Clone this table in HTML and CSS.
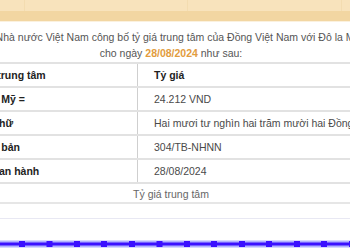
FILE: index.html
```html
<!DOCTYPE html>
<html lang="vi">
<head>
<meta charset="utf-8">
<title>Tỷ giá trung tâm</title>
<link rel="stylesheet" href="styles.css">
</head>
<body>
<div class="band">
  <div class="band-row light">
    <span class="bc c1"></span><span class="bc c2"></span><span class="bc c3"></span><span class="bc c4"></span>
  </div>
  <div class="band-row dark"></div>
</div>
<div class="page">
  <p class="intro">
    <span class="line">Ngân hàng Nhà nước Việt Nam công bố tỷ giá trung tâm của Đồng Việt Nam với Đô la Mỹ áp dụng</span>
    <span class="line">cho ngày <span class="date">28/08/2024</span> như sau:</span>
  </p>
  <div class="rates">
    <div class="row head"><div class="cell key">Tỷ giá trung tâm</div><div class="cell val">Tỷ giá</div></div>
    <div class="row"><div class="cell key">1 Đô la Mỹ =</div><div class="cell val">24.212 VND</div></div>
    <div class="row"><div class="cell key">Bằng chữ</div><div class="cell val">Hai mươi tư nghìn hai trăm mười hai Đồng</div></div>
    <div class="row"><div class="cell key">Số văn bản</div><div class="cell val">304/TB-NHNN</div></div>
    <div class="row last"><div class="cell key">Ngày ban hành</div><div class="cell val">28/08/2024</div></div>
  </div>
  <div class="caption">Tỷ giá trung tâm</div>
</div>
<div class="chart">
  <svg class="chart-svg" width="350" height="32" viewBox="0 0 350 32">
    <line x1="0" y1="25" x2="350" y2="25" stroke="#b0b0ff" stroke-width="7"/>
    <line x1="0" y1="25" x2="350" y2="25" stroke="#3a10ff" stroke-width="3"/>
    <g fill="#3a10ff">
      <rect x="19" y="22" width="6" height="6"/>
      <rect x="46.5" y="22" width="6" height="6"/>
      <rect x="74" y="22" width="6" height="6"/>
      <rect x="101" y="22" width="6" height="6"/>
      <rect x="129" y="22" width="6" height="6"/>
      <rect x="156.5" y="22" width="6" height="6"/>
      <rect x="184" y="22" width="6" height="6"/>
      <rect x="211" y="22" width="6" height="6"/>
      <rect x="239" y="22" width="6" height="6"/>
      <rect x="266" y="22" width="6" height="6"/>
      <rect x="294" y="22" width="6" height="6"/>
      <rect x="321" y="22" width="6" height="6"/>
      <rect x="349" y="22" width="6" height="6"/>
    </g>
  </svg>
</div>
</body>
</html>
```
FILE: styles.css
```css
html, body {
  margin: 0;
  padding: 0;
}
body {
  width: 350px;
  height: 250px;
  overflow: hidden;
  background: #fff;
  font-family: "Liberation Sans", Arial, sans-serif;
  font-size: 10.5px;
  color: #555;
}
.band {
  width: 350px;
}
.band-row {
  display: flex;
}
.band-row.light {
  height: 11px;
  background: #f8e3bc;
}
.band-row.dark {
  height: 10px;
  background: #f2d6a2;
  border-bottom: 1px solid #fbf1de;
}
.bc {
  display: block;
  height: 100%;
  border-right: 1px solid #f3dcb0;
}
.c1 { width: 24px; }
.c2 { width: 162px; }
.c3 { width: 153px; }
.c4 { flex: 1; border-right: none; }

.page {
  width: 460px;
  margin-left: -59px;
}
.intro {
  margin: 7px 0 0;
  text-align: center;
  line-height: 16px;
  white-space: nowrap;
}
.intro .line {
  display: block;
}
.date {
  color: #e29c3e;
  font-weight: bold;
}
.rates {
  width: 430px;
  margin: 1px auto 0;
}
.row {
  display: grid;
  grid-template-columns: 182px 1fr;
  height: 22px;
  border-top: 2px solid #e2e2e2;
}
.row.last {
  border-bottom: 2px solid #e2e2e2;
}
.cell {
  display: flex;
  align-items: center;
  white-space: nowrap;
  overflow: hidden;
}
.key {
  padding-left: 8px;
  border-right: 1px solid #cfcfcf;
  font-weight: bold;
  color: #222;
}
.val {
  padding-left: 16px;
  color: #4a4a4a;
}
.head .val {
  font-weight: bold;
  color: #222;
}
.caption {
  padding-top: 2px;
  line-height: 16px;
  text-align: center;
  color: #666;
  border-bottom: 2px solid #e6e6e6;
}
.chart {
  width: 350px;
  margin-top: 14px;
  border-top: 1px solid #e8e8f3;
}
.chart-svg {
  display: block;
}
```
